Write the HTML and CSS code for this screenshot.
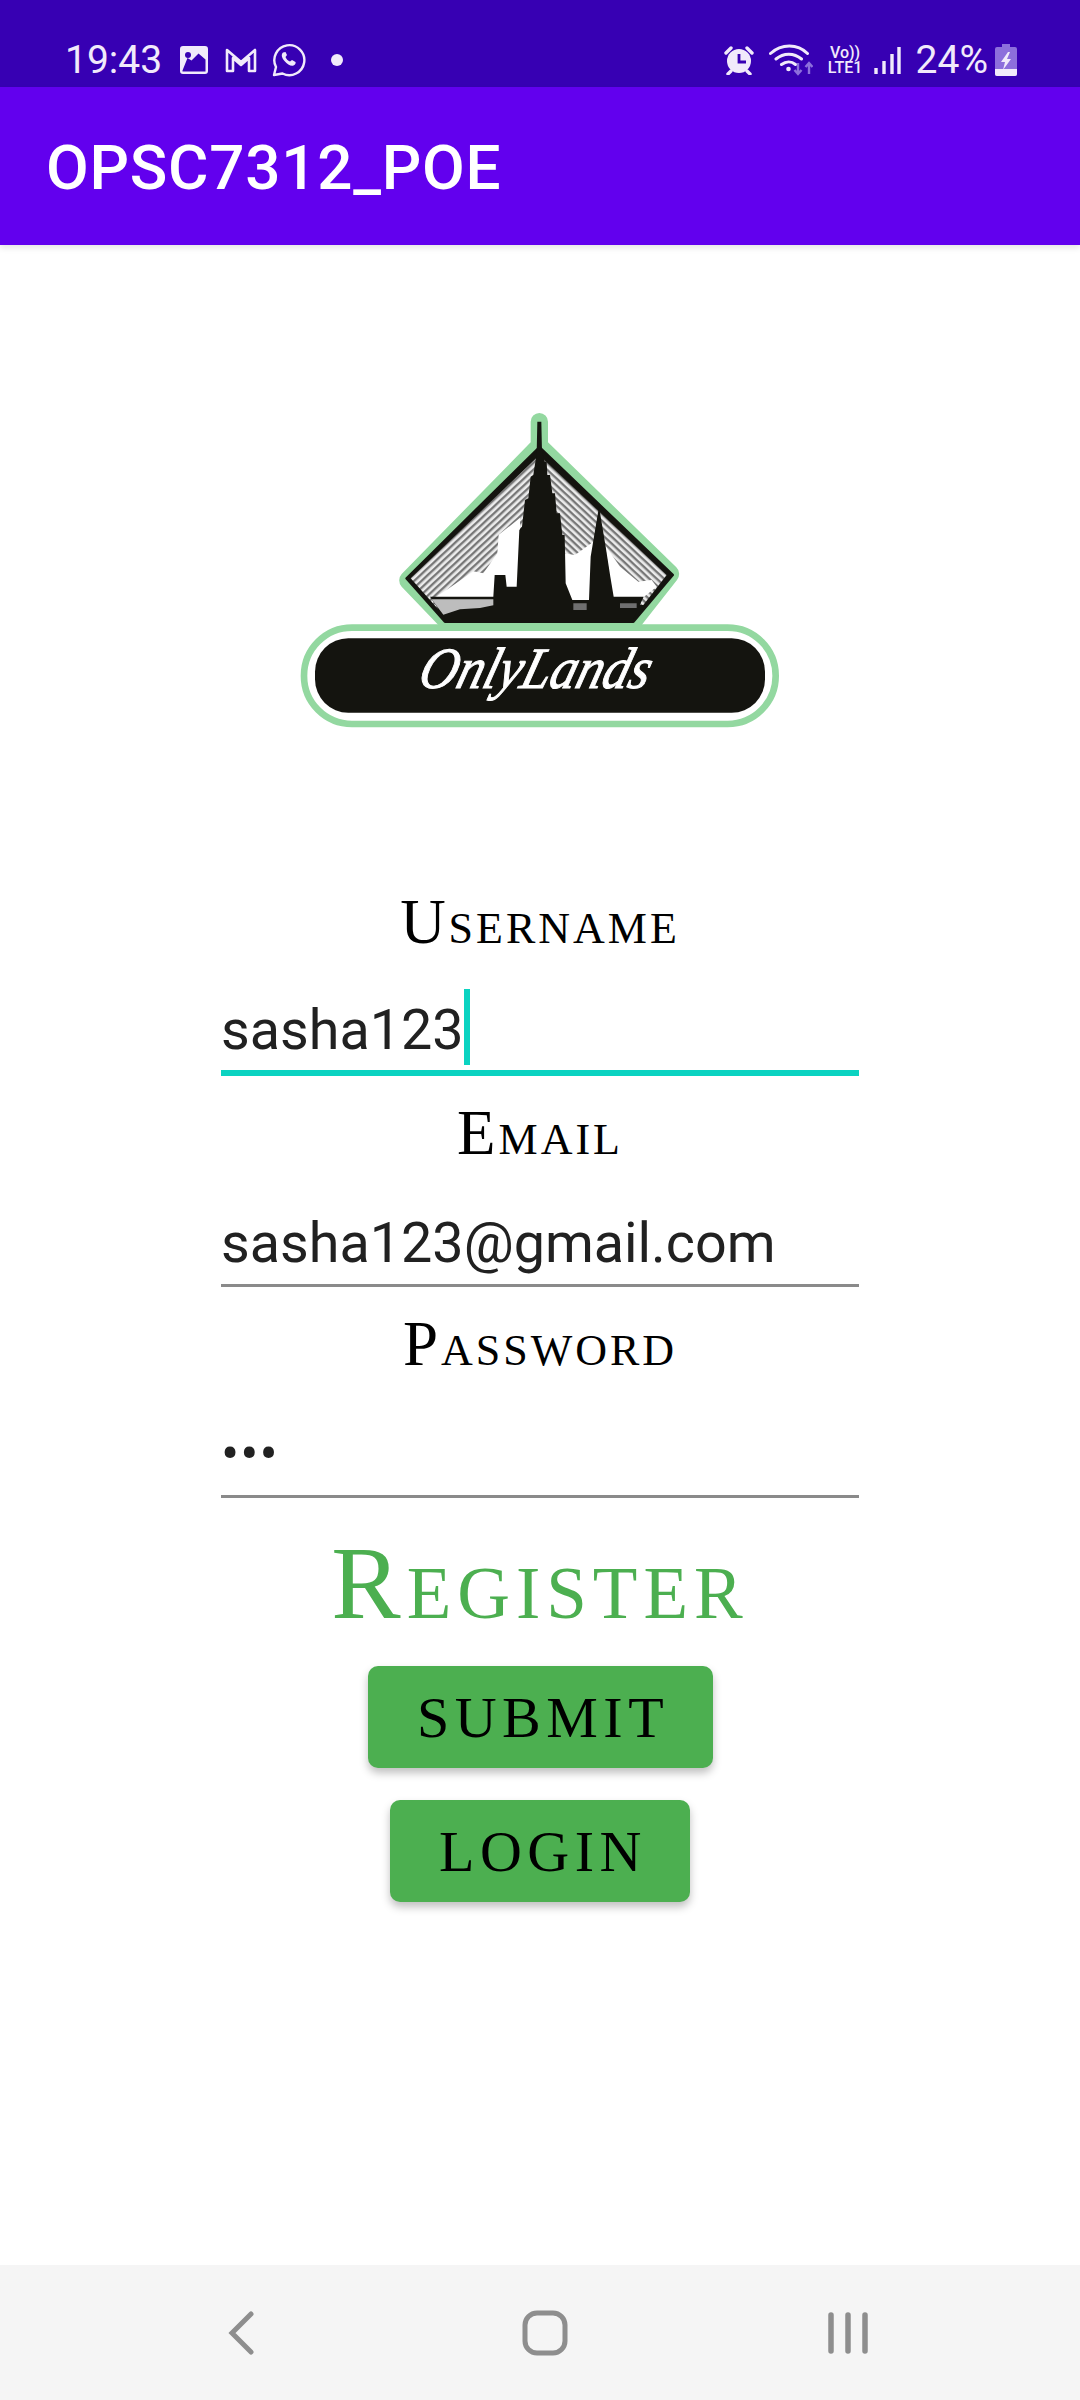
FILE: index.html
```html
<!DOCTYPE html>
<html lang="en">
<head>
    <meta charset="UTF-8">
    <meta name="viewport" content="width=device-width, initial-scale=1.0">
    <title>OPSC7312_POE</title>
    <link rel="stylesheet" href="styles.css">
</head>
<body>
    <div class="status-bar">
        <span class="time">19:43</span>
        <svg class="icon-image" viewBox="0 0 30 30">
            <path fill-rule="evenodd" d="M4 1h22a3 3 0 0 1 3 3v22a3 3 0 0 1-3 3H4a3 3 0 0 1-3-3V4a3 3 0 0 1 3-3zM3.500 25.500v1h23v-12l-7-6-7 7-4-2.500z"/>
            <circle cx="9" cy="10" r="3" fill="#3700b3"/>
        </svg>
        <svg class="icon-gmail" viewBox="0 0 34 28">
            <path d="M3 25V4l14 12L31 4v21h-6V12l-8 7-8-7v13z" fill="none" stroke="#f1eafb" stroke-width="2.600" stroke-linejoin="round"/>
        </svg>
        <svg class="icon-whatsapp" viewBox="0 0 34 34">
            <path d="M2 32l2-8A15 15 0 1 1 10.500 30.500z" fill="none" stroke="#f1eafb" stroke-width="2.400" stroke-linejoin="round"/>
            <path d="M11 9.500c-2 2-1.500 5 1.500 8.500s6.500 5.500 9 4.500c2-1 2.500-2.500 2-3.500l-3.500-2-2 1.500c-2-.5-4-3-4.500-4.500l1.500-2-1.500-3z" fill="#f1eafb"/>
        </svg>
        <span class="status-dot"></span>
        <span class="status-spacer"></span>
        <svg class="icon-alarm" viewBox="0 0 30 30">
            <circle cx="15" cy="16" r="12"/>
            <path d="M2 8l5-5M28 8l-5-5M7 26l-3 3M23 26l3 3" stroke="#f1eafb" stroke-width="3.400" stroke-linecap="round"/>
            <path d="M15 9v8h7" fill="none" stroke="#3700b3" stroke-width="2.800"/>
        </svg>
        <svg class="icon-wifi" viewBox="0 0 44 34">
            <path d="M1.500 10.500c11-10 27-10 37 0M7 16c7.500-6.500 18-6.500 25.500 0M12.500 21.500c4.500-3.500 10-3.500 14 0" fill="none" stroke="#f1eafb" stroke-width="3" stroke-linecap="round"/>
            <circle cx="19.500" cy="26" r="2.300" fill="#f1eafb"/>
            <path d="M29 20v11m-3.500-4l3.500 4 3.500-4" fill="none" stroke="#8d6fdc" stroke-width="2.400"/>
            <path d="M40 31V20m-3.500 4l3.500-4 3.500 4" fill="none" stroke="#8d6fdc" stroke-width="2.400"/>
        </svg>
        <span class="volte"><span>Vo))</span><span>LTE1</span></span>
        <svg class="icon-signal" viewBox="0 0 27 28">
            <path d="M2 22v6M10 15v13M18 8v20M25 1v27" stroke="#f1eafb" stroke-width="3.400"/>
        </svg>
        <span class="battery-text">24%</span>
        <svg class="icon-battery" viewBox="0 0 22 32">
            <path d="M7 0h8v3h5a2 2 0 0 1 2 2v25a2 2 0 0 1-2 2H2a2 2 0 0 1-2-2V5a2 2 0 0 1 2-2h5z" fill="#8d6fdc"/>
            <path d="M0 25h22v5a2 2 0 0 1-2 2H2a2 2 0 0 1-2-2z" fill="#f1eafb"/>
            <path d="M13 8l-7 10h4l-2 8 8-11h-4l3-7z" fill="#f1eafb"/>
        </svg>
    </div>

    <div class="app-bar">OPSC7312_POE</div>

    <div class="content">
        <svg class="logo" viewBox="0 0 1560 1050">
            <defs>
                <pattern id="hatchLeft" width="15" height="15" patternUnits="userSpaceOnUse" patternTransform="rotate(-43)">
                    <rect width="15" height="15" fill="#ececec"/>
                    <rect width="15" height="7" fill="#777777"/>
                </pattern>
                <pattern id="hatchRight" width="15" height="15" patternUnits="userSpaceOnUse" patternTransform="rotate(43)">
                    <rect width="15" height="15" fill="#ececec"/>
                    <rect width="15" height="7" fill="#777777"/>
                </pattern>
            </defs>
            <path d="M752 95a26 26 0 0 1 52 0v62l385 375a28 28 0 0 1 2 38L1085 705H475L365 590a28 28 0 0 1 0-38L752 157z" fill="#93d8a0"/>
            <path d="M778 172L1178 555 1060 695H495L380 565z" fill="#14140f" stroke="#14140f" stroke-width="8" stroke-linejoin="round"/>
            <path d="M778 196L392 565l80 90 300-60V200z" fill="url(#hatchLeft)"/>
            <path d="M778 196L1160 555l-70 90H800z" fill="url(#hatchRight)"/>
            <path d="M458 628l50-34 72-50 30 6 42-60 4-56 64-50v264z" fill="#fff"/>
            <path d="M850 630V490l35 5 55-40v175zM975 465l45 65 55 45 40-5 15 20-50 40h-80z" fill="#fff"/>
            <path d="M772 95h12l2 90 8 30h6l2 40h8l7 55h8l5 60h10l7 65h7l3 145 20 50h50l5-130 25-150 20 120 14 90 10 60h90l-30 65H495l-45-65h190l4-65h32l4 35h30l8-170 8-10 9-80 10-5 7-65 8-5 10-65z" fill="#14140f"/>
            <path d="M455 628h185v18l-40 8-60 4-50 16z" fill="#bdbdbd"/>
            <path d="M880 640h40v20h-40zM1020 640h50v14h-50z" fill="#6f6f6f"/>
            <rect x="72" y="713" width="1415" height="289" rx="144" fill="#fff" stroke="#93d8a0" stroke-width="20"/>
            <rect x="105" y="745" width="1350" height="223" rx="100" fill="#14140f"/>
            <text class="logo-text" x="1010" y="895" textLength="690" lengthAdjust="spacingAndGlyphs" transform="skewX(-16)">OnlyLands</text>
        </svg>

        <form class="form">
            <label class="field-label">Username</label>
            <div class="field field-focused"><span>sasha123</span><span class="caret"></span></div>
            <label class="field-label">Email</label>
            <div class="field"><span>sasha123@gmail.com</span></div>
            <label class="field-label">Password</label>
            <div class="field"><span class="dots">•••</span></div>
        </form>

        <h1 class="heading">Register</h1>
        <button class="btn btn-submit" type="button">SUBMIT</button>
        <button class="btn btn-login" type="button">LOGIN</button>
    </div>

    <div class="nav-bar">
        <svg class="nav-back" viewBox="0 0 26 44">
            <path d="M23 3L4 22l19 19" fill="none" stroke="#8e8e8e" stroke-width="5" stroke-linecap="round"/>
        </svg>
        <svg class="nav-home" viewBox="0 0 46 46">
            <rect x="3" y="3" width="40" height="40" rx="12" fill="none" stroke="#8e8e8e" stroke-width="5"/>
        </svg>
        <svg class="nav-recent" viewBox="0 0 40 42">
            <path d="M3 3v36M20 3v36M37 3v36" stroke="#8e8e8e" stroke-width="5.500" stroke-linecap="round"/>
        </svg>
    </div>
</body>
</html>
```

FILE: styles.css
```css
body {
    margin: 0;
    width: 1080px;
    height: 2400px;
    display: flex;
    flex-direction: column;
    background-color: #ffffff;
    font-family: Roboto, sans-serif;
    overflow: hidden;
}
.status-bar {
    height: 87px;
    flex-shrink: 0;
    display: flex;
    align-items: center;
    padding: 33px 63px 0 65px;
    box-sizing: border-box;
    background-color: #3700b3;
    color: #f1eafb;
    fill: #f1eafb;
}
.time {
    width: 97px;
    font-size: 39px;
    line-height: 40px;
    margin-right: 17px;
}
.icon-image {
    width: 30px;
    height: 30px;
    margin-right: 15px;
}
.icon-gmail {
    width: 34px;
    height: 28px;
    margin-right: 14px;
}
.icon-whatsapp {
    width: 34px;
    height: 34px;
    margin-right: 25px;
}
.status-dot {
    width: 12px;
    height: 12px;
    border-radius: 50%;
    background-color: #f1eafb;
}
.status-spacer {
    flex: 1;
}
.icon-alarm {
    width: 30px;
    height: 30px;
    margin-right: 15px;
}
.icon-wifi {
    width: 44px;
    height: 34px;
    margin-right: 13px;
}
.volte {
    display: flex;
    flex-direction: column;
    align-items: center;
    width: 39px;
    font-size: 16px;
    line-height: 15px;
    font-weight: 500;
    margin-right: 9px;
}
.icon-signal {
    width: 27px;
    height: 28px;
    margin-right: 15px;
}
.battery-text {
    font-size: 39px;
    line-height: 40px;
    margin-right: 7px;
}
.icon-battery {
    width: 22px;
    height: 32px;
}
.app-bar {
    height: 158px;
    flex-shrink: 0;
    display: flex;
    align-items: center;
    padding: 3px 0 0 46px;
    box-sizing: border-box;
    background-color: #6200ee;
    color: #ffffff;
    font-size: 62px;
    font-weight: 500;
    letter-spacing: 0.75px;
    box-shadow: 0 3px 6px rgba(0, 0, 0, 0.1);
    z-index: 1;
}
.content {
    flex: 1;
    display: flex;
    flex-direction: column;
    align-items: center;
}
.logo {
    width: 520px;
    height: 350px;
    margin-top: 145px;
    flex-shrink: 0;
}
.logo-text {
    fill: #ffffff;
    stroke: #ffffff;
    stroke-width: 3px;
    font-family: "Liberation Serif", serif;
    font-style: italic;
    font-size: 175px;
    text-anchor: middle;
}
.form {
    width: 638px;
    margin-top: 153px;
}
.field-label {
    display: block;
    height: 62px;
    line-height: 58px;
    text-align: center;
    font-family: "Liberation Serif", serif;
    font-variant: small-caps;
    font-size: 63px;
    letter-spacing: 3px;
    color: #000000;
}
.field {
    display: flex;
    align-items: center;
    height: 83px;
    margin-bottom: 28px;
    padding-top: 35px;
    border-bottom: 3px solid #8a8a8a;
    font-size: 55.700px;
    color: #212121;
}
.field-focused {
    height: 80px;
    border-bottom: 6px solid #0bd3c1;
}
.caret {
    width: 6px;
    height: 76px;
    margin-top: -6px;
    background-color: #0bd3c1;
}
.dots {
    font-size: 54px;
    letter-spacing: 1px;
}
.heading {
    margin: 1px 0 0;
    height: 112px;
    line-height: 112px;
    font-family: "Liberation Serif", serif;
    font-variant: small-caps;
    font-weight: normal;
    font-size: 104px;
    letter-spacing: 6px;
    color: #4caf50;
}
.btn {
    display: block;
    height: 102px;
    padding: 0 0 0 6px;
    border: none;
    border-radius: 10px;
    background-color: #4caf50;
    box-shadow: 0 5px 8px rgba(0, 0, 0, 0.25);
    font-family: "Liberation Serif", serif;
    font-size: 58px;
    letter-spacing: 5.500px;
    color: #000000;
}
.btn-submit {
    width: 345px;
    margin-top: 27px;
}
.btn-login {
    width: 300px;
    margin-top: 32px;
}
.nav-bar {
    height: 135px;
    flex-shrink: 0;
    display: flex;
    align-items: center;
    padding-left: 228px;
    background-color: #f5f5f5;
}
.nav-back {
    width: 26px;
    height: 44px;
    margin-right: 268px;
}
.nav-home {
    width: 46px;
    height: 46px;
    margin-right: 260px;
}
.nav-recent {
    width: 40px;
    height: 42px;
}
```
